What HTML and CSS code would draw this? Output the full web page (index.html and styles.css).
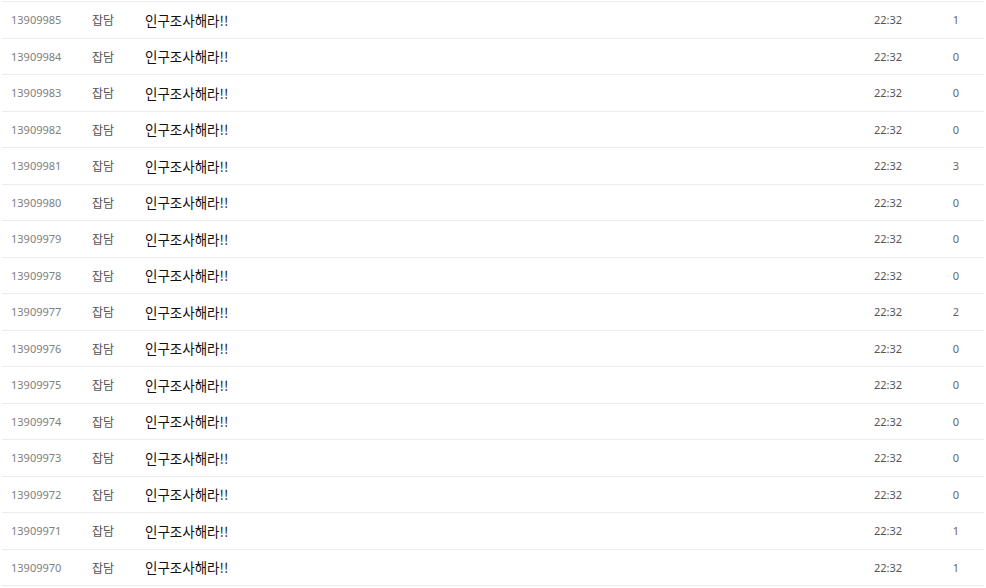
FILE: index.html
```html
<!DOCTYPE html>
<html lang="ko">
<head>
    <meta charset="UTF-8">
    <meta name="viewport" content="width=device-width, initial-scale=1.0">
    <title>게시판</title>
    <link rel="stylesheet" href="styles.css">
</head>
<body>
    <!-- Board list -->
    <div class="board">
        <div class="row"><span class="num">13909985</span><span class="cat">잡담</span><span class="title">인구조사해라!!</span><span class="time">22:32</span><span class="count">1</span></div>
        <div class="row"><span class="num">13909984</span><span class="cat">잡담</span><span class="title">인구조사해라!!</span><span class="time">22:32</span><span class="count">0</span></div>
        <div class="row"><span class="num">13909983</span><span class="cat">잡담</span><span class="title">인구조사해라!!</span><span class="time">22:32</span><span class="count">0</span></div>
        <div class="row"><span class="num">13909982</span><span class="cat">잡담</span><span class="title">인구조사해라!!</span><span class="time">22:32</span><span class="count">0</span></div>
        <div class="row"><span class="num">13909981</span><span class="cat">잡담</span><span class="title">인구조사해라!!</span><span class="time">22:32</span><span class="count">3</span></div>
        <div class="row"><span class="num">13909980</span><span class="cat">잡담</span><span class="title">인구조사해라!!</span><span class="time">22:32</span><span class="count">0</span></div>
        <div class="row"><span class="num">13909979</span><span class="cat">잡담</span><span class="title">인구조사해라!!</span><span class="time">22:32</span><span class="count">0</span></div>
        <div class="row"><span class="num">13909978</span><span class="cat">잡담</span><span class="title">인구조사해라!!</span><span class="time">22:32</span><span class="count">0</span></div>
        <div class="row"><span class="num">13909977</span><span class="cat">잡담</span><span class="title">인구조사해라!!</span><span class="time">22:32</span><span class="count">2</span></div>
        <div class="row"><span class="num">13909976</span><span class="cat">잡담</span><span class="title">인구조사해라!!</span><span class="time">22:32</span><span class="count">0</span></div>
        <div class="row"><span class="num">13909975</span><span class="cat">잡담</span><span class="title">인구조사해라!!</span><span class="time">22:32</span><span class="count">0</span></div>
        <div class="row"><span class="num">13909974</span><span class="cat">잡담</span><span class="title">인구조사해라!!</span><span class="time">22:32</span><span class="count">0</span></div>
        <div class="row"><span class="num">13909973</span><span class="cat">잡담</span><span class="title">인구조사해라!!</span><span class="time">22:32</span><span class="count">0</span></div>
        <div class="row"><span class="num">13909972</span><span class="cat">잡담</span><span class="title">인구조사해라!!</span><span class="time">22:32</span><span class="count">0</span></div>
        <div class="row"><span class="num">13909971</span><span class="cat">잡담</span><span class="title">인구조사해라!!</span><span class="time">22:32</span><span class="count">1</span></div>
        <div class="row"><span class="num">13909970</span><span class="cat">잡담</span><span class="title">인구조사해라!!</span><span class="time">22:32</span><span class="count">1</span></div>
    </div>
</body>
</html>
```

FILE: styles.css
```css
/* Page */
body {
    margin: 0;
    background-color: #fff;
    font-family: "Noto Sans", "Noto Sans CJK KR", sans-serif;
    color: #333;
}
.board {
    margin: 1px 2px 0 2px;
    border-top: 1px solid #ececec;
}
/* One post per row */
.row {
    display: grid;
    grid-template-columns: 90px 53px 1fr 54px 56px;
    align-items: center;
    height: 35.5px;
    border-bottom: 1px solid #ececec;
    font-size: 11px;
}
.num {
    padding-left: 9px;
    color: #808080;
}
.cat {
    font-family: "Noto Sans CJK KR", sans-serif;
    font-size: 12px;
    color: #555;
}
.title {
    font-family: "Noto Sans CJK KR", sans-serif;
    font-size: 13.5px;
    color: #111;
}
.time {
    color: #555;
}
.count {
    text-align: center;
    color: #666;
}
```
